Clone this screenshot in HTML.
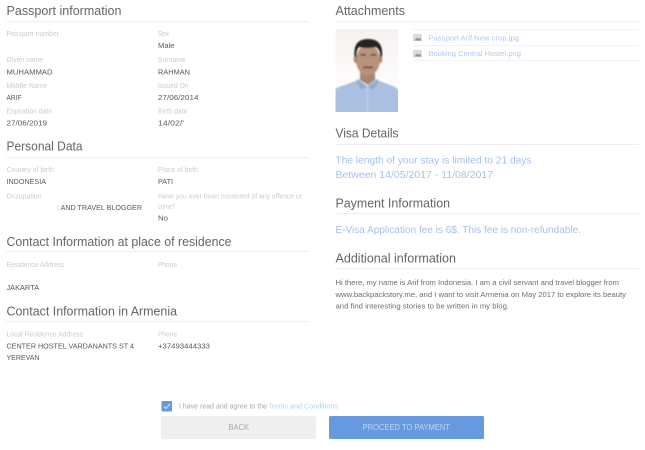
<!DOCTYPE html>
<html>
<head>
<meta charset="utf-8">
<style>
html,body{margin:0;padding:0;background:#fff;width:645px;height:450px;overflow:hidden}
svg{display:block}
text{font-family:"Liberation Sans",sans-serif}
.h{font-size:13px;fill:#656565}
.l{font-size:7px;fill:#cbcbcb}
.v{font-size:7.5px;fill:#585858}
.b{font-size:10.5px;fill:#a6c2ea}
.a{font-size:7.5px;fill:#b0caf0}
.p{font-size:7.5px;fill:#6e6e6e}
</style>
</head>
<body>
<svg width="645" height="450" viewBox="0 0 645 450" xmlns="http://www.w3.org/2000/svg">
<defs>
<filter id="bl" x="-20%" y="-20%" width="140%" height="140%"><feGaussianBlur stdDeviation="0.9"/></filter>
<linearGradient id="bg" x1="0" y1="0" x2="0" y2="1"><stop offset="0" stop-color="#f6f2f1"/><stop offset="0.7" stop-color="#fdfcfc"/><stop offset="1" stop-color="#fff"/></linearGradient>
<clipPath id="ph"><rect x="335.5" y="29" width="62.5" height="83"/></clipPath>
</defs>

<!-- Rules -->
<g fill="#eeeeee">
<rect x="6" y="21" width="303" height="1"/>
<rect x="6" y="157" width="303" height="1"/>
<rect x="6" y="251" width="303" height="1"/>
<rect x="6" y="321" width="303" height="1"/>
<rect x="335.5" y="21" width="303.5" height="1"/>
<rect x="335.5" y="144" width="303.5" height="1"/>
<rect x="335.5" y="213" width="303.5" height="1"/>
<rect x="335.5" y="268" width="303.5" height="1"/>
<rect x="413" y="29" width="226" height="1" fill="#f2f2f2"/>
<rect x="413" y="45" width="226" height="1" fill="#f2f2f2"/>
<rect x="413" y="60" width="226" height="1" fill="#f2f2f2"/>
</g>

<!-- Passport information -->
<text class="h" x="6.5" y="15" textLength="115" lengthAdjust="spacingAndGlyphs">Passport information</text>
<text class="l" x="6.5" y="36" textLength="52.5" lengthAdjust="spacingAndGlyphs">Passport number</text>
<text class="l" x="158" y="36" textLength="11" lengthAdjust="spacingAndGlyphs">Sex</text>
<text class="v" x="158" y="48" textLength="16.5" lengthAdjust="spacingAndGlyphs">Male</text>
<text class="l" x="6.5" y="62" textLength="36.5" lengthAdjust="spacingAndGlyphs">Given name</text>
<text class="l" x="158" y="62" textLength="27.5" lengthAdjust="spacingAndGlyphs">Surname</text>
<text class="v" x="6.5" y="74.7" textLength="46" lengthAdjust="spacingAndGlyphs">MUHAMMAD</text>
<text class="v" x="158" y="74.7" textLength="32" lengthAdjust="spacingAndGlyphs">RAHMAN</text>
<text class="l" x="6.5" y="88" textLength="41" lengthAdjust="spacingAndGlyphs">Middle Name</text>
<text class="l" x="158" y="88" textLength="30.5" lengthAdjust="spacingAndGlyphs">Issued On</text>
<text class="v" x="6.5" y="100" textLength="15" lengthAdjust="spacingAndGlyphs">ARIF</text>
<text class="v" x="158" y="100" textLength="40.5" lengthAdjust="spacingAndGlyphs">27/06/2014</text>
<text class="l" x="6.5" y="113.5" textLength="45.5" lengthAdjust="spacingAndGlyphs">Expiration date</text>
<text class="l" x="158" y="113.5" textLength="29.5" lengthAdjust="spacingAndGlyphs">Birth date</text>
<text class="v" x="6.5" y="125.5" textLength="40.5" lengthAdjust="spacingAndGlyphs">27/06/2019</text>
<text class="v" x="158" y="125.5" textLength="26" lengthAdjust="spacingAndGlyphs">14/02/'</text>

<!-- Personal Data -->
<text class="h" x="6.5" y="150.7" textLength="76" lengthAdjust="spacingAndGlyphs">Personal Data</text>
<text class="l" x="6.5" y="172" textLength="47.5" lengthAdjust="spacingAndGlyphs">Country of birth</text>
<text class="l" x="158" y="172" textLength="40" lengthAdjust="spacingAndGlyphs">Place of birth</text>
<text class="v" x="6.5" y="184" textLength="39.5" lengthAdjust="spacingAndGlyphs">INDONESIA</text>
<text class="v" x="158" y="184" textLength="15" lengthAdjust="spacingAndGlyphs">PATI</text>
<text class="l" x="6.5" y="198.5" textLength="35" lengthAdjust="spacingAndGlyphs">Occupation</text>
<text class="l" x="158" y="198.5" textLength="144" lengthAdjust="spacingAndGlyphs">Have you ever been convicted of any offence or</text>
<text class="v" x="57" y="210" textLength="85" lengthAdjust="spacingAndGlyphs">: AND TRAVEL BLOGGER</text>
<text class="l" x="158" y="209" textLength="17" lengthAdjust="spacingAndGlyphs">crime?</text>
<text class="v" x="158" y="220.5" textLength="10" lengthAdjust="spacingAndGlyphs">No</text>

<!-- Contact at residence -->
<text class="h" x="6.5" y="246" textLength="225" lengthAdjust="spacingAndGlyphs">Contact Information at place of residence</text>
<text class="l" x="6.5" y="267" textLength="58" lengthAdjust="spacingAndGlyphs">Residence Address</text>
<text class="l" x="158" y="267" textLength="19" lengthAdjust="spacingAndGlyphs">Phone</text>
<text class="v" x="6.5" y="290" textLength="32.5" lengthAdjust="spacingAndGlyphs">JAKARTA</text>

<!-- Contact in Armenia -->
<text class="h" x="6.5" y="315.5" textLength="170.5" lengthAdjust="spacingAndGlyphs">Contact Information in Armenia</text>
<text class="l" x="6.5" y="336.7" textLength="76.5" lengthAdjust="spacingAndGlyphs">Local Residence Address</text>
<text class="l" x="158" y="336.7" textLength="19" lengthAdjust="spacingAndGlyphs">Phone</text>
<text class="v" x="6.5" y="348.7" textLength="127.5" lengthAdjust="spacingAndGlyphs">CENTER HOSTEL VARDANANTS ST 4</text>
<text class="v" x="158" y="348.7" textLength="52" lengthAdjust="spacingAndGlyphs">+37493444333</text>
<text class="v" x="6.5" y="360" textLength="33" lengthAdjust="spacingAndGlyphs">YEREVAN</text>

<!-- Attachments -->
<text class="h" x="335.5" y="15" textLength="69.5" lengthAdjust="spacingAndGlyphs">Attachments</text>

<!-- Photo -->
<g clip-path="url(#ph)">
<rect x="335.5" y="29" width="62.5" height="83" fill="url(#bg)"/>
<g filter="url(#bl)">
<path d="M333 114V91Q336 87 345 85L358 80L367 86L377 80L390 85Q398 87 400 94V114Z" fill="#a9c0e0"/>
<path d="M360 70H375V80L368 85L360 80Z" fill="#a98671"/>
<path d="M358 79L367 86L362 90L356 82Z" fill="#94adcf"/>
<path d="M377 79L368 86L373 90L379 82Z" fill="#94adcf"/>
<ellipse cx="368" cy="60" rx="12" ry="15.5" fill="#b8937b"/>
<ellipse cx="355.5" cy="59" rx="1.8" ry="4" fill="#a98670"/>
<ellipse cx="380.5" cy="59" rx="1.8" ry="4" fill="#a98670"/>
<path d="M354.5 57Q352.5 39 368 39Q384 39 382 57L380 56Q380.5 50 376 47Q367 49 359 47Q356 50 356.5 56Z" fill="#2a2423"/>
<rect x="360.5" y="54" width="5.5" height="1.6" fill="#57453c"/>
<rect x="370.5" y="54" width="5.5" height="1.6" fill="#57453c"/>
<rect x="363" y="66.5" width="10" height="1.8" fill="#6e4e40"/>
<path d="M367.5 87V112" stroke="#c6d5ea" stroke-width="1"/>
</g>
</g>

<!-- File list -->
<g>
<rect x="413" y="34" width="9" height="7" fill="#dadada"/>
<path d="M414.5 40.5L417 37.5L418.5 39L420 38L421.5 40.5Z" fill="#909090"/>
<rect x="413" y="50" width="9" height="7" fill="#dadada"/>
<path d="M414.5 56.5L417 53.5L418.5 55L420 54L421.5 56.5Z" fill="#909090"/>
</g>
<text class="a" x="428.5" y="40.7" textLength="90.5" lengthAdjust="spacingAndGlyphs">Passport Arif New crop.jpg</text>
<text class="a" x="428.5" y="56.2" textLength="92.5" lengthAdjust="spacingAndGlyphs">Booking Central Hostel.png</text>

<!-- Visa -->
<text class="h" x="335.5" y="137.7" textLength="63" lengthAdjust="spacingAndGlyphs">Visa Details</text>
<text class="b" x="335.5" y="163.5" textLength="196" lengthAdjust="spacingAndGlyphs">The length of your stay is limited to 21 days</text>
<text class="b" x="335.5" y="178" textLength="157.5" lengthAdjust="spacingAndGlyphs">Between 14/05/2017 - 11/08/2017</text>

<!-- Payment -->
<text class="h" x="335.5" y="207.5" textLength="114.5" lengthAdjust="spacingAndGlyphs">Payment Information</text>
<text class="b" x="335.5" y="233" textLength="245.5" lengthAdjust="spacingAndGlyphs">E-Visa Application fee is 6$. This fee is non-refundable.</text>

<!-- Additional -->
<text class="h" x="335.5" y="262.7" textLength="120.5" lengthAdjust="spacingAndGlyphs">Additional information</text>
<text class="p" x="335.5" y="285" textLength="283.5" lengthAdjust="spacingAndGlyphs">Hi there, my name is Arif from Indonesia. I am a civil servant and travel blogger from</text>
<text class="p" x="335.5" y="297" textLength="290.5" lengthAdjust="spacingAndGlyphs">www.backpackstory.me, and I want to visit Armenia on May 2017 to explore its beauty</text>
<text class="p" x="335.5" y="308.7" textLength="173.5" lengthAdjust="spacingAndGlyphs">and find interesting stories to be written in my blog.</text>

<!-- Agreement -->
<rect x="161.5" y="401" width="10.5" height="10.5" rx="1" fill="#6699dd"/>
<path d="M164 406.5L166 408.5L170 403.8" fill="none" stroke="#dfe9f8" stroke-width="1.1"/>
<text x="179" y="408.7" font-size="7.5" fill="#a8a8a8" textLength="88" lengthAdjust="spacingAndGlyphs">I have read and agree to the</text>
<text x="268.5" y="408.7" font-size="7.5" fill="#a6d8f5" textLength="69.5" lengthAdjust="spacingAndGlyphs">Terms and Conditions</text>

<!-- Buttons -->
<rect x="161" y="416" width="155" height="23" rx="1.5" fill="#efefef"/>
<text x="228.5" y="429.8" font-size="8" fill="#a8a8a8" textLength="20.5" lengthAdjust="spacingAndGlyphs">BACK</text>
<rect x="329" y="416" width="155" height="23" rx="1.5" fill="#6699dd"/>
<text x="362.5" y="429.8" font-size="8" fill="#c4d6f0" textLength="87.5" lengthAdjust="spacingAndGlyphs">PROCEED TO PAYMENT</text>
</svg>
</body>
</html>
